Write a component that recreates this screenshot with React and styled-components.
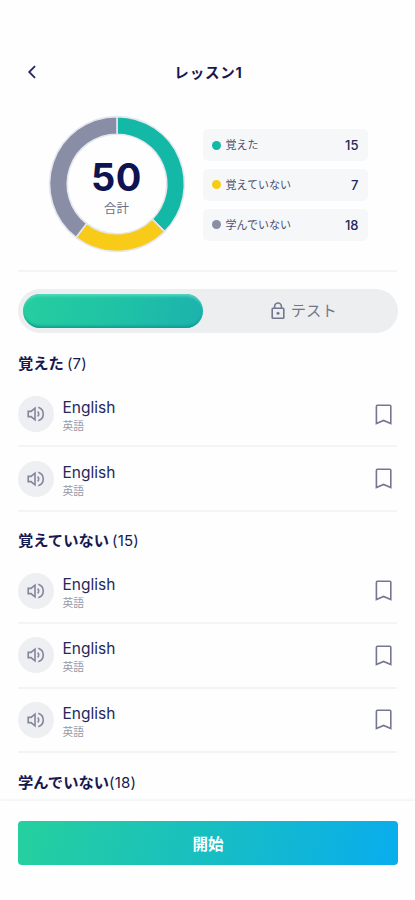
import React from "react";
import styled, { createGlobalStyle } from "styled-components";

const GlobalStyle = createGlobalStyle`
    * {
        box-sizing: border-box;
    }

    body {
        margin: 0;
        background: #fefefe;
        font-family: Inter, "Noto Sans CJK JP", sans-serif;
        color: #16194f;
    }

    button {
        font-family: inherit;
        border: none;
        padding: 0;
        background: none;
    }
`;

const Screen = styled.div`
    width: 100%;
    height: 900px;
    display: flex;
    flex-direction: column;
    overflow: hidden;
`;

const Header = styled.header`
    height: 44px;
    margin-top: 50px;
    padding: 0 18px;
    display: grid;
    grid-template-columns: 28px 1fr 28px;
    align-items: center;
    flex-shrink: 0;
`;

const BackButton = styled.button`
    display: flex;
    justify-content: center;
    color: #25285c;
`;

const Title = styled.h1`
    margin: 0;
    padding: 1px 0 0 2px;
    font-size: 14.5px;
    line-height: 20px;
    font-weight: 700;
    text-align: center;
    letter-spacing: 0.8px;
`;

const Summary = styled.section`
    height: 176px;
    padding: 22px 0 0 48.5px;
    display: flex;
    flex-shrink: 0;
`;

const ChartBox = styled.div`
    width: 136px;
    height: 136px;
    display: grid;
    place-items: center;

    > * {
        grid-area: 1 / 1;
    }
`;

const ChartLabel = styled.div`
    display: flex;
    flex-direction: column;
    align-items: center;
    padding-top: 6px;
`;

const Total = styled.div`
    font-size: 38px;
    line-height: 38px;
    font-weight: 700;
    letter-spacing: 0.6px;
    color: #0e1452;
    margin-top: 2px;
`;

const TotalText = styled.div`
    font-size: 12.5px;
    line-height: 18px;
    color: #6b6e84;
    margin-top: 4px;
`;

const Legend = styled.div`
    width: 165px;
    margin: 13px 0 0 18px;
    display: flex;
    flex-direction: column;
    gap: 7.5px;
`;

const LegendItem = styled.div`
    height: 32.3px;
    padding: 0 9px;
    display: flex;
    align-items: center;
    border-radius: 5px;
    background: #f6f7f9;
`;

const Dot = styled.span`
    width: 9px;
    height: 9px;
    border-radius: 50%;
    background: ${(props) => props.$color};
`;

const LegendName = styled.span`
    flex: 1;
    margin-left: 5px;
    font-size: 11px;
    line-height: 16px;
    color: #4d506e;
`;

const LegendValue = styled.span`
    font-size: 13px;
    line-height: 16px;
    font-weight: 500;
    color: #25285c;
`;

const Divider = styled.div`
    height: 2px;
    margin: 0 18px;
    flex-shrink: 0;
    background: #f3f4f5;
`;

const Tabs = styled.div`
    height: 44px;
    margin: 17px 17.5px 1px 18px;
    padding: 5px;
    display: grid;
    grid-template-columns: 180px 1fr;
    flex-shrink: 0;
    border-radius: 22px;
    background: #eceef0;
`;

const ActiveTab = styled.button`
    height: 34px;
    border-radius: 17px;
    background: linear-gradient(100deg, #25cd9f 5%, #1fc3a5 50%, #1db2ae 100%);
    box-shadow: inset 0 -4px 3px -2px #129b8e, inset 0 4px 3px -2px #55d9bc;
`;

const Tab = styled.button`
    display: flex;
    align-items: center;
    justify-content: center;
    gap: 6px;
    padding-left: 12px;
    font-size: 15.3px;
    line-height: 22px;
    color: #74778c;
`;

const List = styled.main`
    flex: 1;
    min-height: 0;
    padding: 0 18px;
    overflow: hidden;
`;

const Group = styled.section`
    margin-bottom: -1px;

    &:last-child {
        padding-top: 1px;
    }
`;

const GroupTitle = styled.h2`
    height: 49px;
    margin: 0;
    padding-top: 19px;
    font-size: 15.3px;
    line-height: 22px;
    font-weight: 700;
`;

const Count = styled.span`
    margin-left: ${(props) => props.$gap}px;
    font-weight: 400;
    font-size: 15px;
    letter-spacing: 0.2px;
`;

const Row = styled.div`
    height: 64.4px;
    display: flex;
    align-items: center;
    border-bottom: 2px solid #f3f4f5;
`;

const SoundButton = styled.button`
    width: 36px;
    height: 36px;
    display: flex;
    align-items: center;
    justify-content: center;
    border-radius: 50%;
    background: #eeeff2;
    color: #83869b;
`;

const Word = styled.div`
    flex: 1;
    margin-left: 8.5px;
    padding-top: 5px;
`;

const WordText = styled.div`
    font-size: 15.5px;
    line-height: 20px;
    color: #25285c;
`;

const Meaning = styled.div`
    font-size: 10.8px;
    line-height: 16px;
    margin-top: 1px;
    color: #9799a8;
`;

const BookmarkButton = styled.button`
    display: flex;
    margin-right: 5px;
    color: #74778f;
`;

const Footer = styled.footer`
    height: 99px;
    padding: 20px 17px 0 18px;
    flex-shrink: 0;
    background: #fefefe;
    box-shadow: 0 -1px 3px #eeeff1;
`;

const StartButton = styled.button`
    width: 100%;
    height: 44px;
    border-radius: 4px;
    background: linear-gradient(105deg, #25cf9f 3%, #18bfc0 48%, #0aaeea 95%);
    color: #fff;
    font-size: 15.5px;
    font-weight: 700;
`;

const stats = [
    { name: "覚えた", value: 15, color: "#14b8a6", from: 0, to: 135 },
    { name: "覚えていない", value: 7, color: "#f8cb18", from: 135, to: 217.5 },
    { name: "学んでいない", value: 18, color: "#8a8da6", from: 217.5, to: 360 },
];

const groups = [
    { name: "覚えた", count: 7, gap: 3, rows: 2 },
    { name: "覚えていない", count: 15, gap: 3, rows: 3 },
    { name: "学んでいない", count: 18, gap: 0, rows: 0 },
];

const point = (angle, radius) => {
    const rad = (angle * Math.PI) / 180;
    return `${68 + radius * Math.sin(rad)} ${68 - radius * Math.cos(rad)}`;
};

const slicePath = (from, to) =>
    `M${point(from, 67.4)} A67.4 67.4 0 0 1 ${point(to, 67.4)} L${point(to, 49.8)} A49.8 49.8 0 0 0 ${point(from, 49.8)} Z`;

function Donut() {
    return (
        <svg width="136" height="136" viewBox="0 0 136 136" overflow="visible">
            {stats.map((item) => (
                <path
                    key={item.name}
                    d={slicePath(item.from, item.to)}
                    fill={item.color}
                    stroke="#e4e7ee"
                    strokeWidth="1.6"
                />
            ))}
        </svg>
    );
}

function BackIcon() {
    return (
        <svg width="10" height="14" viewBox="0 0 10 14" fill="none" stroke="currentColor" strokeWidth="1.8">
            <path d="M8 1.2 2.2 7 8 12.8" />
        </svg>
    );
}

function LockIcon() {
    return (
        <svg width="14" height="18" viewBox="0 0 14 18" fill="none" stroke="currentColor" strokeWidth="1.6">
            <rect x="1.2" y="6.2" width="11.6" height="10" rx="0.8" />
            <path d="M3.6 6.2V4.4a3.4 3.4 0 0 1 6.8 0v1.8" />
            <circle cx="7" cy="11.2" r="1.5" fill="currentColor" stroke="none" />
        </svg>
    );
}

function SoundIcon() {
    return (
        <svg width="18" height="16" viewBox="0 0 18 16" fill="none" stroke="currentColor" strokeWidth="1.6">
            <path d="M1.2 5.4h2.8L8 2.2v11.6L4 10.6H1.2Z" />
            <path d="M10.6 5.6c1.5 1.2 1.5 3.6 0 4.8" />
            <path d="M11.3 1.3c6.6 2.2 6.6 11.2 0 13.4" />
        </svg>
    );
}

function BookmarkIcon() {
    return (
        <svg width="17" height="21" viewBox="0 0 17 21" fill="none" stroke="currentColor" strokeWidth="1.6">
            <path d="M1.4 19.5V2.3c0-.7.4-1.1 1.1-1.1h12.2c.7 0 1.1.4 1.1 1.1v17.2l-7.2-3.1Z" />
        </svg>
    );
}

function WordRow() {
    return (
        <Row>
            <SoundButton>
                <SoundIcon />
            </SoundButton>
            <Word>
                <WordText>English</WordText>
                <Meaning>英語</Meaning>
            </Word>
            <BookmarkButton>
                <BookmarkIcon />
            </BookmarkButton>
        </Row>
    );
}

export default function App() {
    return (
        <Screen>
            <GlobalStyle />
            <Header>
                <BackButton>
                    <BackIcon />
                </BackButton>
                <Title>レッスン1</Title>
            </Header>

            <Summary>
                <ChartBox>
                    <Donut />
                    <ChartLabel>
                        <Total>50</Total>
                        <TotalText>合計</TotalText>
                    </ChartLabel>
                </ChartBox>
                <Legend>
                    {stats.map((item) => (
                        <LegendItem key={item.name}>
                            <Dot $color={item.color} />
                            <LegendName>{item.name}</LegendName>
                            <LegendValue>{item.value}</LegendValue>
                        </LegendItem>
                    ))}
                </Legend>
            </Summary>

            <Divider />

            <Tabs>
                <ActiveTab />
                <Tab>
                    <LockIcon />
                    テスト
                </Tab>
            </Tabs>

            <List>
                {groups.map((group) => (
                    <Group key={group.name}>
                        <GroupTitle>
                            {group.name}
                            <Count $gap={group.gap}>({group.count})</Count>
                        </GroupTitle>
                        {Array.from({ length: group.rows }, (_, i) => (
                            <WordRow key={i} />
                        ))}
                    </Group>
                ))}
            </List>

            <Footer>
                <StartButton>開始</StartButton>
            </Footer>
        </Screen>
    );
}
